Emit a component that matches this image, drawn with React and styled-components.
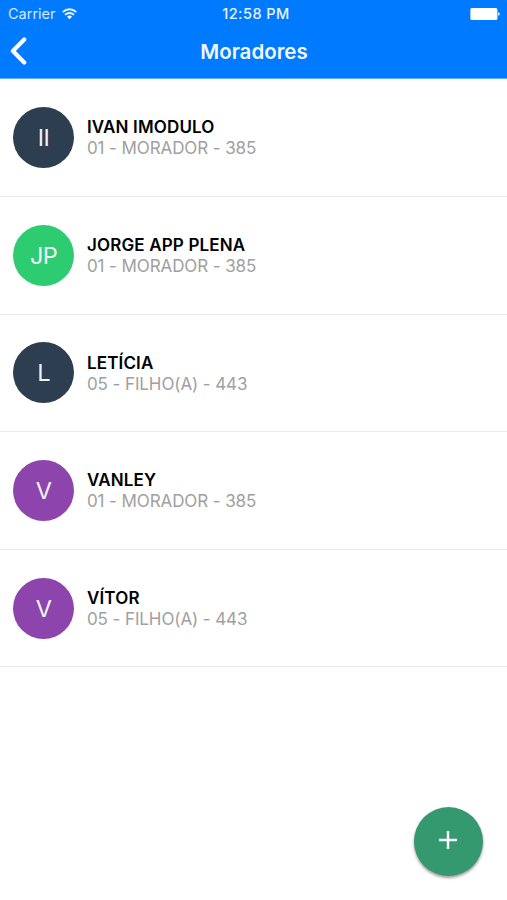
import React from 'react'
import styled, { createGlobalStyle } from 'styled-components'

const GlobalStyle = createGlobalStyle`
  * {
    box-sizing: border-box;
  }
  body {
    margin: 0;
    background: #fff;
    font-family: Inter, 'Liberation Sans', sans-serif;
  }
`
const Screen = styled.div`
  position: relative;
  width: 507px;
  height: 900px;
  overflow: hidden;
  background: #fff;
`
const Header = styled.header`
  height: 79px;
  background: #007aff;
  border-bottom: 1px solid #62b0ff;
  color: #fff;
`
const StatusBar = styled.div`
  height: 27px;
  padding: 0 7px 0 8px;
  display: grid;
  grid-template-columns: 1fr auto 1fr;
  align-items: center;
`
const Carrier = styled.span`
  display: flex;
  align-items: center;
  gap: 6px;
  font-size: 14.5px;
  letter-spacing: 0;
  color: #d3e9ff;
`
const Clock = styled.span`
  padding-left: 4px;
  font-size: 14.5px;
  font-weight: 500;
  letter-spacing: 0.45px;
  color: #eaf4ff;
`
const BatteryIcon = styled.svg`
  justify-self: end;
`
const NavBar = styled.div`
  height: 48px;
  display: grid;
  grid-template-columns: 60px 1fr 60px;
  align-items: center;
`
const BackButton = styled.button`
  height: 48px;
  padding: 0 0 0 9px;
  display: flex;
  align-items: center;
  border: none;
  background: none;
`
const Title = styled.h1`
  margin: 0;
  padding: 1px 0 0 1px;
  text-align: center;
  font-size: 20.5px;
  font-weight: 600;
  line-height: 47px;
  color: #f2f8ff;
`
const List = styled.ul`
  margin: 0;
  padding: 0.5px 0 0;
  list-style: none;
`
const Row = styled.li`
  height: 117.6px;
  padding: 0 13px;
  display: flex;
  align-items: center;
  gap: 13px;
  border-bottom: 1.4px solid #e9e9eb;
`
const Avatar = styled.div`
  width: 61px;
  height: 61px;
  display: flex;
  align-items: center;
  justify-content: center;
  border-radius: 50%;
  background: ${props => props.$color};
  color: #eef3f6;
  font-size: 23.5px;
  font-weight: 400;
  letter-spacing: -0.6px;
`
const Info = styled.div`
  padding-top: 1.3px;
  display: grid;
  line-height: 21px;
`
const Name = styled.strong`
  font-size: 17px;
  font-weight: 600;
  letter-spacing: 0.15px;
  color: #000;
`
const Detail = styled.span`
  font-size: 17px;
  letter-spacing: -0.1px;
  color: #a0a0a0;
`
const AddButton = styled.button`
  position: absolute;
  right: 24px;
  bottom: 24px;
  width: 69px;
  height: 69px;
  padding: 0 2px 3px 0;
  display: flex;
  align-items: center;
  justify-content: center;
  border: none;
  border-radius: 50%;
  background: #359970;
  box-shadow: 0 2px 3px rgba(0, 0, 0, 0.4);
`

const moradores = [
  { initials: 'II', name: 'IVAN IMODULO', detail: '01 - MORADOR - 385', color: '#2c3e50' },
  { initials: 'JP', name: 'JORGE APP PLENA', detail: '01 - MORADOR - 385', color: '#2ecc71' },
  { initials: 'L', name: 'LETÍCIA', detail: '05 - FILHO(A) - 443', color: '#2c3e50' },
  { initials: 'V', name: 'VANLEY', detail: '01 - MORADOR - 385', color: '#8e44ad' },
  { initials: 'V', name: 'VÍTOR', detail: '05 - FILHO(A) - 443', color: '#8e44ad' }
]

function App() {
  return (
    <Screen>
      <GlobalStyle />
      <Header>
        <StatusBar>
          <Carrier>
            Carrier
            <svg width='15' height='12' viewBox='0 0 15 12' fill='none' stroke='#e3f1ff' strokeWidth='1.9'>
              <path d='M0.7 4.1a9.7 9.7 0 0 1 13.6 0' />
              <path d='M3 6.9a6.4 6.4 0 0 1 9 0' />
              <path d='M7.5 11.3L5 8.8a3.6 3.6 0 0 1 5 0z' fill='#fff' stroke='none' />
            </svg>
          </Carrier>
          <Clock>12:58 PM</Clock>
          <BatteryIcon width='30' height='12' viewBox='0 0 30 12' fill='#fff'>
            <rect x='0.4' y='0' width='27' height='12' rx='1.5' />
            <path d='M28.2 4.2c2 .5 2 3.1 0 3.6z' />
          </BatteryIcon>
        </StatusBar>
        <NavBar>
          <BackButton aria-label='Voltar'>
            <svg width='19' height='28' viewBox='0 0 19 28' fill='none' stroke='#fff' strokeWidth='4.2' strokeLinecap='round' strokeLinejoin='round'>
              <path d='M15.2 2.5L3.9 14L15.2 25.5' />
            </svg>
          </BackButton>
          <Title>Moradores</Title>
        </NavBar>
      </Header>
      <List>
        {moradores.map(morador => (
          <Row key={morador.name}>
            <Avatar $color={morador.color}>{morador.initials}</Avatar>
            <Info>
              <Name>{morador.name}</Name>
              <Detail>{morador.detail}</Detail>
            </Info>
          </Row>
        ))}
      </List>
      <AddButton aria-label='Adicionar'>
        <svg width='18' height='18' viewBox='0 0 18 18' stroke='#fff' strokeWidth='2.4'>
          <path d='M9 0v18M0 9h18' />
        </svg>
      </AddButton>
    </Screen>
  )
}

export default App
